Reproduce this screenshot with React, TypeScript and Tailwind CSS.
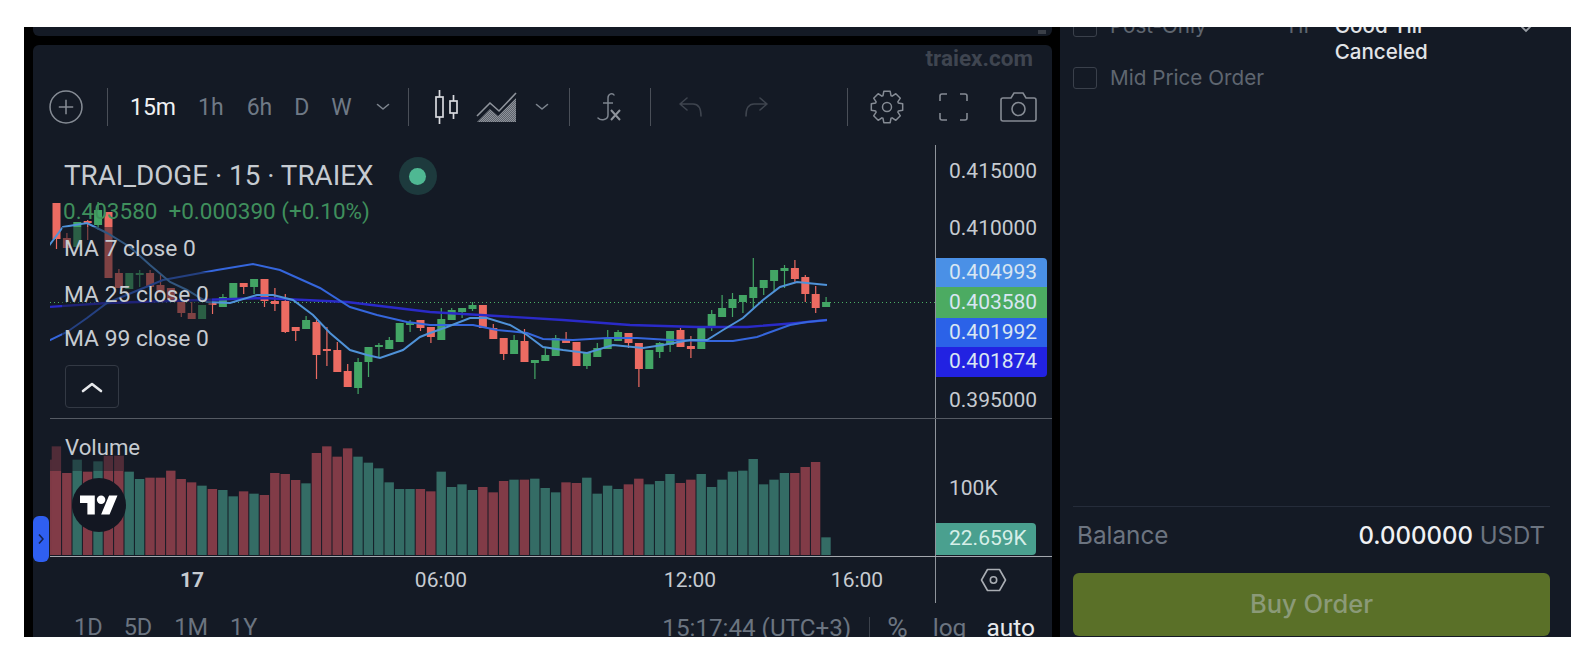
import type React from "react"

type Candle = [number, number, number, number, "r" | "g"]

// bodyTop, bodyBottom, wickTop, wickBottom (page y coordinates)
const candles: Candle[] = [
  [203, 239, 203, 249, "r"], [238, 248, 233, 248, "r"], [222, 247, 222, 247, "g"], [221, 223, 220, 240, "r"],
  [210, 225, 202, 230, "g"], [212, 278, 212, 278, "r"], [273, 288, 269, 288, "r"], [273, 289, 273, 289, "g"],
  [273, 275, 270, 287, "g"], [273, 287, 270, 287, "r"], [285, 293, 275, 293, "r"], [288, 302, 288, 302, "r"],
  [302, 313, 302, 317, "r"], [313, 319, 302, 319, "r"], [305, 319, 305, 319, "g"], [303, 305, 303, 314, "r"],
  [297, 307, 294, 307, "g"], [283, 298, 283, 298, "g"], [283, 287, 283, 294, "r"], [279, 287, 279, 294, "g"],
  [279, 301, 279, 307, "r"], [301, 304, 288, 311, "r"], [301, 332, 294, 333, "r"], [327, 331, 327, 341, "r"],
  [320, 329, 316, 329, "g"], [322, 355, 320, 379, "r"], [349, 351, 327, 366, "r"], [350, 372, 342, 372, "r"],
  [371, 387, 364, 387, "r"], [362, 388, 358, 394, "g"], [347, 362, 347, 377, "g"], [345, 347, 343, 357, "g"],
  [340, 349, 337, 349, "g"], [323, 342, 323, 342, "g"], [322, 325, 320, 332, "g"], [320, 328, 320, 331, "r"],
  [327, 337, 327, 343, "r"], [319, 340, 308, 340, "g"], [310, 320, 308, 320, "g"], [308, 312, 308, 318, "g"],
  [305, 309, 302, 311, "g"], [305, 328, 305, 328, "r"], [328, 339, 324, 339, "r"], [338, 354, 338, 360, "r"],
  [340, 354, 335, 354, "g"], [341, 362, 329, 362, "r"], [360, 363, 360, 379, "g"], [355, 361, 348, 361, "g"],
  [338, 356, 335, 356, "g"], [339, 343, 332, 343, "r"], [342, 366, 342, 366, "r"], [353, 366, 353, 369, "g"],
  [348, 357, 343, 357, "g"], [339, 349, 330, 349, "g"], [332, 341, 330, 341, "g"], [333, 343, 333, 348, "r"],
  [343, 369, 343, 387, "r"], [350, 369, 350, 369, "g"], [343, 352, 342, 358, "g"], [331, 345, 331, 352, "g"],
  [330, 347, 328, 347, "r"], [346, 349, 336, 358, "r"], [326, 349, 326, 349, "g"], [314, 327, 310, 331, "g"],
  [308, 317, 295, 317, "g"], [299, 308, 293, 317, "g"], [295, 302, 295, 313, "g"], [287, 298, 258, 308, "g"],
  [280, 288, 280, 295, "g"], [270, 281, 270, 292, "g"], [268, 271, 265, 288, "g"], [268, 279, 260, 283, "r"],
  [277, 294, 275, 302, "r"], [294, 308, 286, 313, "r"], [302, 307, 297, 307, "g"],
]

// top of each volume bar, in zoomed pixel rows of the screenshot (baseline 408)
const volumes: [number, "r" | "g"][] = [
  [82, "r"], [162, "r"], [122, "g"], [158, "r"], [127, "g"], [110, "r"], [110, "r"], [158, "g"], [180, "g"], [176, "r"],
  [176, "r"], [155, "r"], [180, "r"], [190, "r"], [200, "g"], [210, "r"], [213, "g"], [232, "g"], [217, "r"], [224, "g"],
  [228, "r"], [162, "r"], [165, "r"], [183, "r"], [193, "g"], [102, "r"], [82, "r"], [113, "r"], [88, "r"], [113, "g"],
  [131, "g"], [148, "g"], [190, "g"], [210, "g"], [210, "g"], [210, "r"], [217, "r"], [158, "g"], [204, "g"], [196, "g"],
  [213, "g"], [204, "r"], [220, "r"], [186, "r"], [182, "g"], [182, "r"], [179, "g"], [207, "g"], [220, "g"], [190, "r"],
  [192, "r"], [176, "g"], [224, "g"], [200, "g"], [210, "g"], [196, "r"], [179, "r"], [196, "g"], [186, "g"], [165, "g"],
  [192, "r"], [182, "r"], [165, "g"], [204, "g"], [182, "g"], [158, "g"], [155, "g"], [120, "g"], [196, "g"], [182, "g"],
  [162, "g"], [162, "r"], [144, "r"], [129, "r"], [355, "g"],
]

const ma7 = "48,247 63,227 87,223 107,233 130,247 150,265 170,282 187,290 207,302 230,303 257,295 273,295 293,300 313,315 330,333 350,350 367,355 380,358 403,350 420,337 430,333 447,327 470,318 487,318 510,325 527,335 543,347 563,350 587,353 613,345 643,348 663,345 690,340 707,340 723,330 743,318 763,300 780,287 797,282 827,285"
const ma25 = "48,341 67,332 87,318 107,303 163,280 217,270 253,264 280,270 320,288 350,307 377,315 407,322 430,325 443,325 473,325 497,330 527,333 543,339 573,340 607,338 637,338 670,340 707,341 733,341 757,337 790,325 807,322 827,320"
const ma99 = "48,307 107,303 263,298 347,302 430,312 497,316 563,320 630,325 697,327 747,327 797,323 827,320"

const gearPath = (() => {
  const pts: string[] = []
  for (let i = 0; i < 8; i++) {
    const a = (i * Math.PI) / 4 - Math.PI / 2
    const at = (r: number, d: number) => `${(17 + r * Math.cos(a + d)).toFixed(2)} ${(17 + r * Math.sin(a + d)).toFixed(2)}`
    pts.push(`L${at(12, -0.34)} L${at(16, -0.2)} L${at(16, 0.2)} L${at(12, 0.34)}`)
  }
  return "M" + pts.join(" ").slice(1) + " Z"
})()

const Divider = ({ className }: { className: string }) => <div className={`w-px h-[38px] bg-[#4a4f58] ${className}`} />

const Chevron = ({ className }: { className: string }) => (
  <svg width="16" height="10" viewBox="0 0 16 10" className={className} fill="none" stroke="#7d848e" strokeWidth="1.6">
    <path d="M2.5 2.5 8 7l5.5-4.5" strokeLinecap="round" strokeLinejoin="round" />
  </svg>
)

const Interval = ({ label, className }: { label: string; className: string }) => (
  <span className={`text-[23px] leading-none text-[#6f7986] ${className}`}>{label}</span>
)

const Toolbar = () => (
  <div className="relative h-[100px] pt-[24px] pl-[16px] flex items-center shrink-0">
    <span className="absolute top-[1px] right-[19px] text-[22.5px] leading-[24px] font-bold text-[#3f4550]">traiex.com</span>
    <svg width="34" height="34" viewBox="0 0 33 33" fill="none" stroke="#858b94" strokeWidth="1.5">
      <circle cx="16.5" cy="16.5" r="15.5" />
      <path d="M16.5 9.5v14M9.5 16.5h14" />
    </svg>
    <Divider className="ml-[24px]" />
    <span className="ml-[22px] text-[23px] leading-none text-[#f0f1f3]">15m</span>
    <Interval label="1h" className="ml-[22px]" />
    <Interval label="6h" className="ml-[23px]" />
    <Interval label="D" className="ml-[22px]" />
    <Interval label="W" className="ml-[22px]" />
    <Chevron className="ml-[23px]" />
    <Divider className="ml-[17px]" />
    <svg width="23" height="34" viewBox="0 0 23 34" className="ml-[26px]" fill="none" stroke="#d8dade" strokeWidth="1.7">
      <rect x="1" y="7" width="7" height="20" />
      <path d="M4.5 0v7M4.5 27v7" />
      <rect x="15" y="11" width="7" height="12" />
      <path d="M18.5 5v6M18.5 23v6" />
    </svg>
    <svg width="41" height="31" viewBox="0 0 41 31" className="ml-[18px]" fill="none">
      <defs>
        <pattern id="hatch" width="2" height="2" patternUnits="userSpaceOnUse">
          <rect width="2" height="2" fill="#5d626b" />
          <rect width="1" height="1" fill="#8e939b" />
          <rect x="1" y="1" width="1" height="1" fill="#8e939b" />
        </pattern>
      </defs>
      <path d="M1 30 14 17l8 7L40 6v24z" fill="url(#hatch)" />
      <path d="M1 24 14 11l9 8L40 1" stroke="#8e939b" strokeWidth="1.6" />
    </svg>
    <Chevron className="ml-[17px]" />
    <Divider className="ml-[19px]" />
    <svg width="24" height="30" viewBox="0 0 24 30" className="ml-[27px]" fill="none" stroke="#7d848e" strokeWidth="1.5">
      <path d="M17 3c-1-2-6-2-6 3v17c0 5-7 6-10 3" strokeLinecap="round" />
      <path d="M6 11h10" />
      <path d="M14 18l9 10M23 18l-9 10" stroke="#8e939b" strokeWidth="2" />
    </svg>
    <Divider className="ml-[29px]" />
    <svg width="23" height="20" viewBox="0 0 23 20" className="ml-[28px]" fill="none" stroke="#3e444e" strokeWidth="1.6">
      <path d="M8 1 1 7l7 6M1 7h13c5 0 8 4 8 12" strokeLinecap="round" strokeLinejoin="round" />
    </svg>
    <svg width="23" height="20" viewBox="0 0 23 20" className="ml-[43px]" fill="none" stroke="#3e444e" strokeWidth="1.6">
      <path d="M15 1l7 6-7 6M22 7H9c-5 0-8 4-8 12" strokeLinecap="round" strokeLinejoin="round" />
    </svg>
    <Divider className="ml-[79px]" />
    <svg width="34" height="34" viewBox="0 0 34 34" className="ml-[22px]" fill="none" stroke="#858b94" strokeWidth="1.5" strokeLinejoin="round">
      <path d={gearPath} />
      <circle cx="17" cy="17" r="4.5" />
    </svg>
    <svg width="29" height="28" viewBox="0 0 29 28" className="ml-[35px]" fill="none" stroke="#858b94" strokeWidth="1.6">
      <path d="M1 8V3a2 2 0 0 1 2-2h5M21 1h5a2 2 0 0 1 2 2v5M28 20v5a2 2 0 0 1-2 2h-5M8 27H3a2 2 0 0 1-2-2v-5" />
    </svg>
    <svg width="37" height="30" viewBox="0 0 37 30" className="ml-[32px]" fill="none" stroke="#858b94" strokeWidth="1.6">
      <path d="M3 6h8l3-5h9l3 5h8a2 2 0 0 1 2 2v19a2 2 0 0 1-2 2H3a2 2 0 0 1-2-2V8a2 2 0 0 1 2-2z" />
      <circle cx="18.5" cy="17" r="6.5" />
    </svg>
  </div>
)

const PriceChart = () => (
  <svg width="885" height="273" viewBox="50 145 885 273" className="block">
    <line x1="50" y1="302.5" x2="935" y2="302.5" stroke="#4caf65" strokeWidth="1" strokeDasharray="1 3" />
    {candles.map(([top, bottom, wickTop, wickBottom, side], i) => {
      const x = 56.5 + 10.4 * i
      const color = side === "r" ? "#ec6b62" : "#43a565"
      return (
        <g key={i} fill={color}>
          <rect x={x - 0.6} y={wickTop} width="1.2" height={wickBottom - wickTop} />
          <rect x={x - 4} y={top} width="8" height={bottom - top} />
        </g>
      )
    })}
    <polyline points={ma99} fill="none" stroke="#2a2ac8" strokeWidth="2.4" />
    <polyline points={ma25} fill="none" stroke="#3566dc" strokeWidth="2" />
    <polyline points={ma7} fill="none" stroke="#4f92d8" strokeWidth="2" />
  </svg>
)

const VolumeChart = () => (
  <svg width="885" height="137" viewBox="50 420 885 137" className="block">
    <rect x="50" y={420 + 122 / 3} width="2" height={(408 - 122) / 3} fill="#7e3a45" />
    {volumes.map(([top, side], i) => (
      <rect
        key={i}
        x={51.7 + 10.4 * i}
        y={420 + top / 3}
        width="9.4"
        height={(408 - top) / 3}
        fill={side === "r" ? "#813b47" : "#346c65"}
      />
    ))}
  </svg>
)

const MaRow = ({ label, className }: { label: string; className: string }) => (
  <div className={`w-fit flex items-center pl-[2px] pr-[3px] bg-[#141a25]/50 text-[22.8px] text-[#c6cbd1] ${className}`}>{label}</div>
)

const Legend = () => (
  <div className="absolute left-[12px] top-[13px] flex flex-col">
    <div className="h-[36px] flex items-center pl-[2px] text-[27.8px] text-[#c6cbd1]">
      <span>TRAI_DOGE · 15 · TRAIEX</span>
      <span className="ml-[25px] w-[38px] h-[38px] rounded-full bg-[#1d3a3d] flex items-center justify-center">
        <span className="w-[17px] h-[17px] rounded-full bg-[#4fb893]" />
      </span>
    </div>
    <div className="w-fit h-[36px] flex items-center gap-[11px] pl-[1px] pr-[3px] text-[22.5px] text-[#3f8f5c]">
      <span>0.403580</span>
      <span>+0.000390 (+0.10%)</span>
    </div>
    <MaRow label="MA 7 close 0" className="-mt-[3px] h-[45px]" />
    <MaRow label="MA 25 close 0" className="h-[46px]" />
    <MaRow label="MA 99 close 0" className="h-[42px]" />
    <div className="ml-[3px] mt-[5px] w-[54px] h-[43px] rounded-[4px] border border-[#333944] flex items-center justify-center">
      <svg width="22" height="12" viewBox="0 0 22 12" fill="none" stroke="#e6e8eb" strokeWidth="2.6">
        <path d="M2 10 11 3l9 7" strokeLinecap="round" strokeLinejoin="round" />
      </svg>
    </div>
  </div>
)

const AxisPrice = ({ value, className }: { value: string; className: string }) => (
  <div className={`h-[30px] pl-[13px] flex items-center text-[21px] text-[#c6cbd1] ${className}`}>{value}</div>
)

const PriceTag = ({ value, className }: { value: string; className: string }) => (
  <div className={`w-[111px] pl-[13px] flex items-center text-[21px] text-[#d8e6f2] ${className}`}>{value}</div>
)

const ChartPanel = () => (
  <div className="mt-[9px] flex-1 min-h-0 flex flex-col rounded-t-[6px] bg-[#141a25] overflow-hidden relative font-[family-name:Roboto,sans-serif]">
    <Toolbar />
    <div className="pl-[17px]">
      {/* price pane */}
      <div className="flex h-[274px] border-b border-[#555a63]">
        <div className="relative w-[885px]">
          <PriceChart />
          <Legend />
        </div>
        <div className="flex-1 border-l border-[#8f949b]">
          <AxisPrice value="0.415000" className="mt-[12px]" />
          <AxisPrice value="0.410000" className="mt-[27px]" />
          <div className="mt-[14px]">
            <PriceTag value="0.404993" className="h-[29px] bg-[#4a90e6] rounded-tr-[4px]" />
            <PriceTag value="0.403580" className="h-[31px] bg-[#4cab62]" />
            <PriceTag value="0.401992" className="h-[29px] bg-[#2b62e8]" />
            <PriceTag value="0.401874" className="h-[30px] bg-[#2222e2] rounded-br-[4px]" />
          </div>
          <AxisPrice value="0.395000" className="mt-[9px]" />
        </div>
      </div>
      {/* volume pane */}
      <div className="flex h-[138px] border-b border-[#a4a8ae]">
        <div className="relative w-[885px]">
          <VolumeChart />
          <div className="absolute left-0 top-[13px] h-[39px] w-[73px] bg-[#141a25]/45" />
          <span className="absolute left-[15px] top-[14px] text-[22.2px] leading-[28px] text-[#c6cbd1]">Volume</span>
          <div className="absolute left-[22px] top-[59px] w-[54px] h-[54px] rounded-full bg-[#131722] flex items-center justify-center">
            <svg width="38" height="20" viewBox="0 4 36 18" fill="#ffffff">
              <path d="M14 22H7V11H0V4h14v18zM28 22h-8l7.5-18h8L28 22z" />
              <circle cx="20" cy="8" r="4" />
            </svg>
          </div>
        </div>
        <div className="flex-1 border-l border-[#8f949b]">
          <div className="mt-[55px] h-[30px] pl-[13px] flex items-center text-[21px] text-[#c6cbd1]">100K</div>
          <div className="mt-[19px] w-[100px] h-[32px] pl-[13px] flex items-center rounded-r-[4px] bg-[#4aa08f] text-[21px] text-[#d6efe8]">22.659K</div>
        </div>
      </div>
      {/* time axis */}
      <div className="flex h-[46px]">
        <div className="w-[885px] pt-[2px] flex items-center text-[21px] text-[#c6cbd1]">
          <span className="ml-[102px] w-[80px] text-center font-bold">17</span>
          <span className="ml-[169px] w-[80px] text-center">06:00</span>
          <span className="ml-[169px] w-[80px] text-center">12:00</span>
          <span className="ml-[87px] w-[80px] text-center">16:00</span>
        </div>
        <div className="flex-1 border-l border-[#8f949b] pl-[44px] flex items-center">
          <svg width="27" height="24" viewBox="0 0 27 24" fill="none" stroke="#a9adb3" strokeWidth="1.6">
            <path d="M7.5 1.5h12l6 10.5-6 10.5h-12L1.5 12z" strokeLinejoin="round" />
            <circle cx="13.5" cy="12" r="3.2" />
          </svg>
        </div>
      </div>
    </div>
    {/* range row, cut off by the bottom of the screenshot */}
    <div className="pl-[41px] h-[50px] flex items-center text-[23.5px] text-[#6b7480] shrink-0">
      <span>1D</span>
      <span className="ml-[21px]">5D</span>
      <span className="ml-[22px]">1M</span>
      <span className="ml-[22px]">1Y</span>
      <span className="ml-[405px] text-[24.2px]">15:17:44 (UTC+3)</span>
      <span className="ml-[18px] w-px h-[22px] bg-[#3c424c]" />
      <span className="ml-[17px] text-[28px]">%</span>
      <span className="ml-[25px] text-[24.5px]">log</span>
      <span className="ml-[20px] text-[24.5px] text-[#e8eaed]">auto</span>
    </div>
  </div>
)

const OrderPanel = () => (
  <div className="w-[511px] ml-[8px] bg-[#141a25] flex flex-col pl-[13px] pr-[21px] overflow-hidden font-[family-name:Inter,sans-serif]">
    <div className="relative -mt-[14px] flex h-[52px] text-[20.6px] leading-[26px] shrink-0">
      <span className="mt-[2px] w-[24px] h-[22px] rounded-[3px] border border-[#3a404b]" />
      <span className="ml-[13px] text-[#5f6670]">Post-Only</span>
      <span className="ml-[78px] text-[#5f6670]">TIF</span>
      <span className="ml-[19px] font-medium text-[#e2e4e8]">
        Good Till
        <br />
        Canceled
      </span>
      <svg width="14" height="9" viewBox="0 0 14 9" className="absolute right-[17px] top-[11px]" fill="none" stroke="#9a9fa6" strokeWidth="1.8">
        <path d="M1 1l6 6 6-6" />
      </svg>
    </div>
    <div className="mt-[2px] flex items-center h-[22px] shrink-0">
      <span className="w-[24px] h-[22px] rounded-[3px] border border-[#3a404b]" />
      <span className="ml-[13px] text-[20.7px] text-[#5f6670]">Mid Price Order</span>
    </div>
    <div className="flex-1" />
    <div className="border-t border-[#252c3a] h-[58px] mb-[9px] pl-[4px] pr-[5px] flex items-center justify-between shrink-0">
      <span className="text-[24.3px] text-[#6c7480]">Balance</span>
      <span className="text-[24px] text-[#6c7480]">
        <span className="font-medium text-[#f0f1f3]">0.000000</span> USDT
      </span>
    </div>
    <div className="mb-px h-[63px] rounded-[6px] bg-[#5a7028] flex items-center justify-center text-[25.5px] font-medium text-[#8b9a78] shrink-0">
      Buy Order
    </div>
  </div>
)

const App: React.FC = () => {
  return (
    <div className="w-[1592px] h-[668px] bg-white pt-[27px] pl-[24px] overflow-hidden">
      <div className="relative w-[1547px] h-[610px] bg-black flex overflow-hidden">
        {/* blue side handle sits over the volume pane */}
        <div className="absolute z-10 left-[9px] top-[489px] w-[16px] h-[46px] rounded-[6px] bg-[#2f5ff0] flex items-center justify-center">
          <svg width="6" height="12" viewBox="0 0 6 12" fill="none" stroke="#14224f" strokeWidth="1.6">
            <path d="M1 1.5 5 6l-4 4.5" />
          </svg>
        </div>
        <div className="w-[1028px] pl-[9px] flex flex-col">
          <div className="relative h-[9px] rounded-b-[6px] bg-[#141a25] shrink-0">
            <span className="absolute right-[6px] top-[3px] w-[8px] h-[4px] bg-[#3a3f48]" />
          </div>
          <ChartPanel />
        </div>
        <OrderPanel />
      </div>
    </div>
  )
}

export default App
